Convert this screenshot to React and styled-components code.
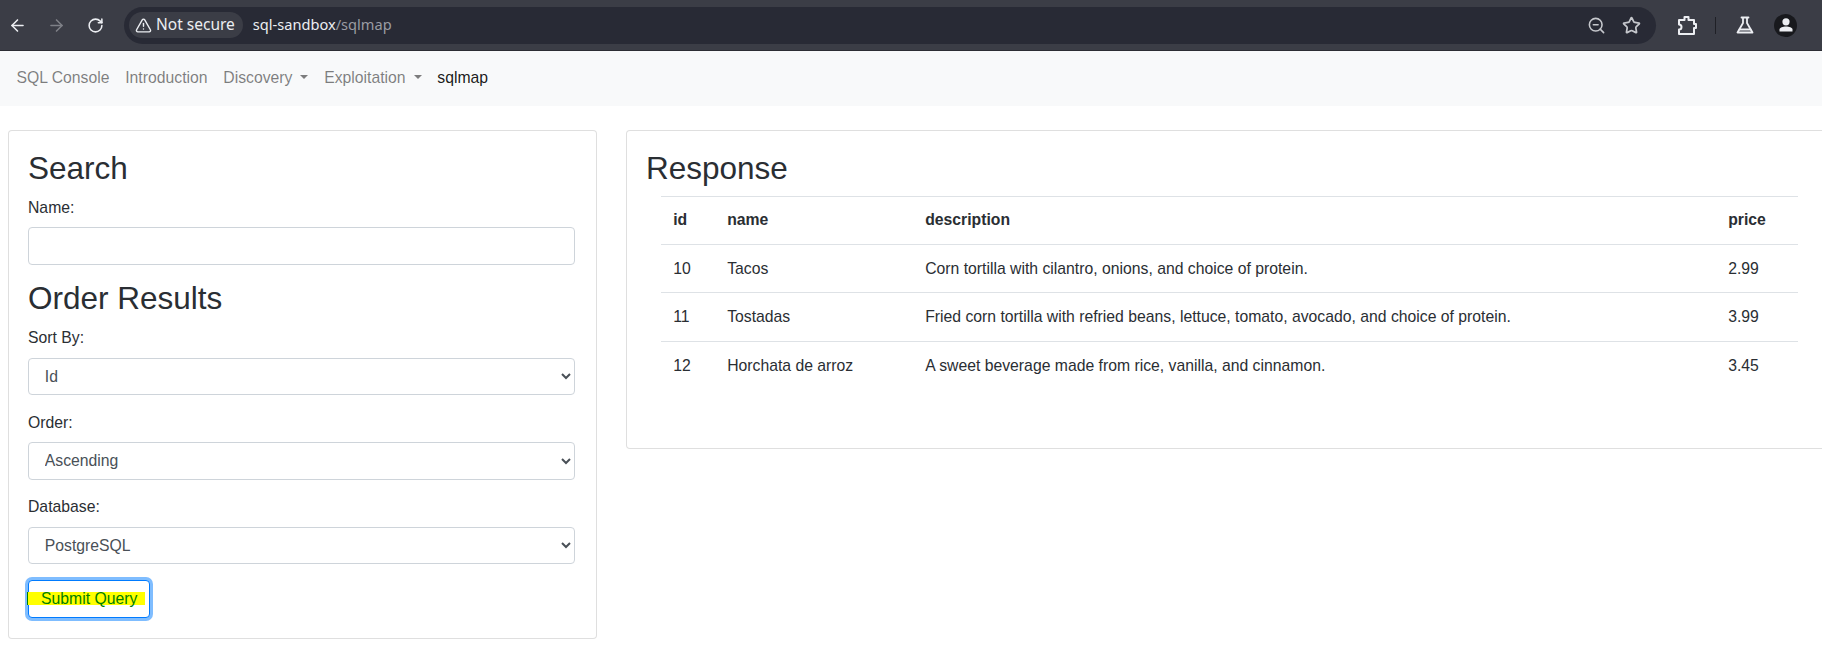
import { createGlobalStyle } from 'styled-components';
import styled from 'styled-components';
import { ArrowLeft, ArrowRight, RotateCw, TriangleAlert, ZoomOut, Star } from 'lucide-react';

const GlobalStyle = createGlobalStyle`
  html, body {
    margin: 0;
    height: 100%;
    overflow: hidden;
    background: #fff;
  }
  body {
    font-family: "Liberation Sans", Arial, sans-serif;
    font-size: 15.76px;
    line-height: 1.5;
    color: #2a2e33;
  }
  * { box-sizing: border-box; }
`;

const Toolbar = styled.div`
  display: flex;
  align-items: center;
  height: 51px;
  padding: 0 25px 0 0;
  background: #3b3d46;
  border-bottom: 1px solid #2c2d34;
`;

const NavIcon = styled.span`
  display: flex;
  justify-content: center;
  width: 35px;
  margin-right: 4px;
  color: ${(p) => (p.$off ? '#7e8087' : '#eceef2')};
`;

const Omnibox = styled.div`
  flex: 1;
  display: flex;
  align-items: center;
  height: 37px;
  margin: 0 20px 0 7px;
  padding: 0 15px 0 5px;
  background: #282a35;
  border-radius: 19px;
`;

const SecurityChip = styled.div`
  display: flex;
  align-items: center;
  gap: 4px;
  height: 26px;
  padding: 0 8px 0 6px;
  background: #3b3d46;
  border-radius: 13px;
  color: #eceef2;
  font-family: "Noto Sans", sans-serif;
  font-size: 15.5px;
`;

const Url = styled.div`
  flex: 1;
  margin-left: 10px;
  color: #eceef2;
  font-family: "Noto Sans", sans-serif;
  font-size: 14.6px;

  span {
    color: #9a9ca3;
  }
`;

const BoxIcons = styled.div`
  display: flex;
  align-items: center;
  gap: 16px;
  color: #c5c7cc;
`;

const ToolIcons = styled.div`
  display: flex;
  align-items: center;
  color: #eceef2;
`;

const Divider = styled.i`
  width: 1px;
  height: 17px;
  margin: 0 19px 0 17px;
  background: #1f2026;
`;

const Avatar = styled.span`
  display: flex;
  align-items: center;
  justify-content: center;
  width: 23px;
  height: 23px;
  margin-left: 19px;
  background: #18191d;
  border-radius: 50%;
`;

const Navbar = styled.nav`
  display: flex;
  align-items: center;
  height: 55px;
  padding: 0 8.5px 2px;
  background: #f8f9fa;
`;

const NavLink = styled.a`
  display: flex;
  align-items: center;
  padding: 0 7.88px;
  color: ${(p) => (p.$active ? 'rgba(0,0,0,.9)' : 'rgba(0,0,0,.5)')};

  ${(p) => p.$drop && `
    &::after {
      content: "";
      margin-left: 8px;
      border-top: 4.7px solid;
      border-right: 4.7px solid transparent;
      border-left: 4.7px solid transparent;
    }
  `}
`;

const Content = styled.div`
  display: grid;
  grid-template-columns: 589px 1208px;
  column-gap: 29px;
  align-items: start;
  width: 1900px;
  padding: 24px 0 0 8px;
`;

const Card = styled.section`
  height: ${(p) => p.$height}px;
  padding: 19px 21px 0 19px;
  background: #fff;
  border: 1px solid rgba(0,0,0,.125);
  border-radius: 4px;
`;

const Heading = styled.h2`
  margin: 0 0 7.88px;
  font-size: 31.5px;
  font-weight: 500;
  line-height: 1.2;
`;

const Field = styled.div`
  margin-bottom: 15.76px;
`;

const Label = styled.label`
  display: block;
  margin-bottom: 7.88px;
`;

const TextInput = styled.input`
  display: block;
  width: 100%;
  height: 37.4px;
  padding: 0 12px;
  background: #fff;
  border: 1px solid #ced4da;
  border-radius: 4px;
`;

const Select = styled.select`
  display: block;
  width: 100%;
  height: 37.4px;
  padding: 0 11.8px;
  font: inherit;
  color: #495057;
  background: #fff;
  border: 1px solid #ced4da;
  border-radius: 4px;
`;

const SubmitButton = styled.button`
  display: flex;
  align-items: center;
  width: 122px;
  height: 38px;
  padding: 0;
  font: inherit;
  background: #fff;
  border: 1px solid #007bff;
  border-radius: 4px;
  box-shadow: 0 0 0 3px rgba(0,123,255,.5);
`;

const Highlight = styled.span`
  display: block;
  margin-left: -2px;
  padding: 0 8px 0 13px;
  color: #008000;
  background: #ffff00;
  border-left: 1px solid #008000;
  line-height: 13px;
  white-space: nowrap;
`;

const Table = styled.table`
  width: 1137px;
  margin: 0.7px 0 0 14.7px;
  border-collapse: collapse;
  table-layout: fixed;

  th, td {
    height: 48.4px;
    padding: 0 0 0 12.5px;
    text-align: left;
    border-top: 1px solid #dee2e6;
  }

  th {
    padding-bottom: 1px;
    font-weight: 700;
  }
`;

const ProfileGlyph = () => (
  <svg width="18" height="18" viewBox="0 0 18 18" fill="#eceef2">
    <circle cx="9" cy="5.800" r="3.600" />
    <path d="M2.500 15.500v-1.900C2.500 11.500 6 10.500 9 10.500s6.500 1 6.500 3.100v1.900z" />
  </svg>
);

const ExtensionGlyph = () => (
  <svg width="22" height="22" viewBox="0 0 22 22" fill="none" stroke="currentColor" strokeWidth="2" strokeLinejoin="round">
    <path d="M3 6h5.500V3h4v3H18v4h2v4h-2v6H3v-4.500c1.500 0 2.500-1 2.500-2.500S4.500 10.500 3 10.500z" />
  </svg>
);

const FlaskGlyph = () => (
  <svg width="20" height="20" viewBox="0 0 20 20" fill="none" stroke="currentColor" strokeWidth="1.800" strokeLinejoin="round" strokeLinecap="round">
    <path d="M6.500 2.500h7M8 2.500v5.500L2.500 17.500h15L12 8V2.500" />
    <path d="M4.500 14.500h11" />
  </svg>
);

const rows = [
  { id: 10, name: 'Tacos', description: 'Corn tortilla with cilantro, onions, and choice of protein.', price: '2.99' },
  { id: 11, name: 'Tostadas', description: 'Fried corn tortilla with refried beans, lettuce, tomato, avocado, and choice of protein.', price: '3.99' },
  { id: 12, name: 'Horchata de arroz', description: 'A sweet beverage made from rice, vanilla, and cinnamon.', price: '3.45' },
];

const selects = [
  { label: 'Sort By:', value: 'Id' },
  { label: 'Order:', value: 'Ascending' },
  { label: 'Database:', value: 'PostgreSQL' },
];

const App = () => (
  <>
    <GlobalStyle />
    <Toolbar>
      <NavIcon><ArrowLeft size={19} /></NavIcon>
      <NavIcon $off><ArrowRight size={19} /></NavIcon>
      <NavIcon><RotateCw size={17} strokeWidth={2.2} /></NavIcon>
      <Omnibox>
        <SecurityChip>
          <TriangleAlert size={17} />
          Not secure
        </SecurityChip>
        <Url>sql-sandbox<span>/sqlmap</span></Url>
        <BoxIcons>
          <ZoomOut size={19} />
          <Star size={19} strokeWidth={2.2} />
        </BoxIcons>
      </Omnibox>
      <ToolIcons>
        <ExtensionGlyph />
        <Divider />
        <FlaskGlyph />
        <Avatar><ProfileGlyph /></Avatar>
      </ToolIcons>
    </Toolbar>
    <Navbar>
      <NavLink>SQL Console</NavLink>
      <NavLink>Introduction</NavLink>
      <NavLink $drop>Discovery</NavLink>
      <NavLink $drop>Exploitation</NavLink>
      <NavLink $active>sqlmap</NavLink>
    </Navbar>
    <Content>
      <Card $height={509}>
        <Heading>Search</Heading>
        <Field>
          <Label>Name:</Label>
          <TextInput />
        </Field>
        <Heading>Order Results</Heading>
        {selects.map((s) => (
          <Field key={s.label}>
            <Label>{s.label}</Label>
            <Select defaultValue={s.value}>
              <option>{s.value}</option>
            </Select>
          </Field>
        ))}
        <SubmitButton><Highlight>Submit Query</Highlight></SubmitButton>
      </Card>
      <Card $height={319}>
        <Heading>Response</Heading>
        <Table>
          <colgroup>
            <col style={{ width: 54 }} />
            <col style={{ width: 198 }} />
            <col style={{ width: 803 }} />
            <col />
          </colgroup>
          <thead>
            <tr><th>id</th><th>name</th><th>description</th><th>price</th></tr>
          </thead>
          <tbody>
            {rows.map((r) => (
              <tr key={r.id}>
                <td>{r.id}</td>
                <td>{r.name}</td>
                <td>{r.description}</td>
                <td>{r.price}</td>
              </tr>
            ))}
          </tbody>
        </Table>
      </Card>
    </Content>
  </>
);

export default App;
